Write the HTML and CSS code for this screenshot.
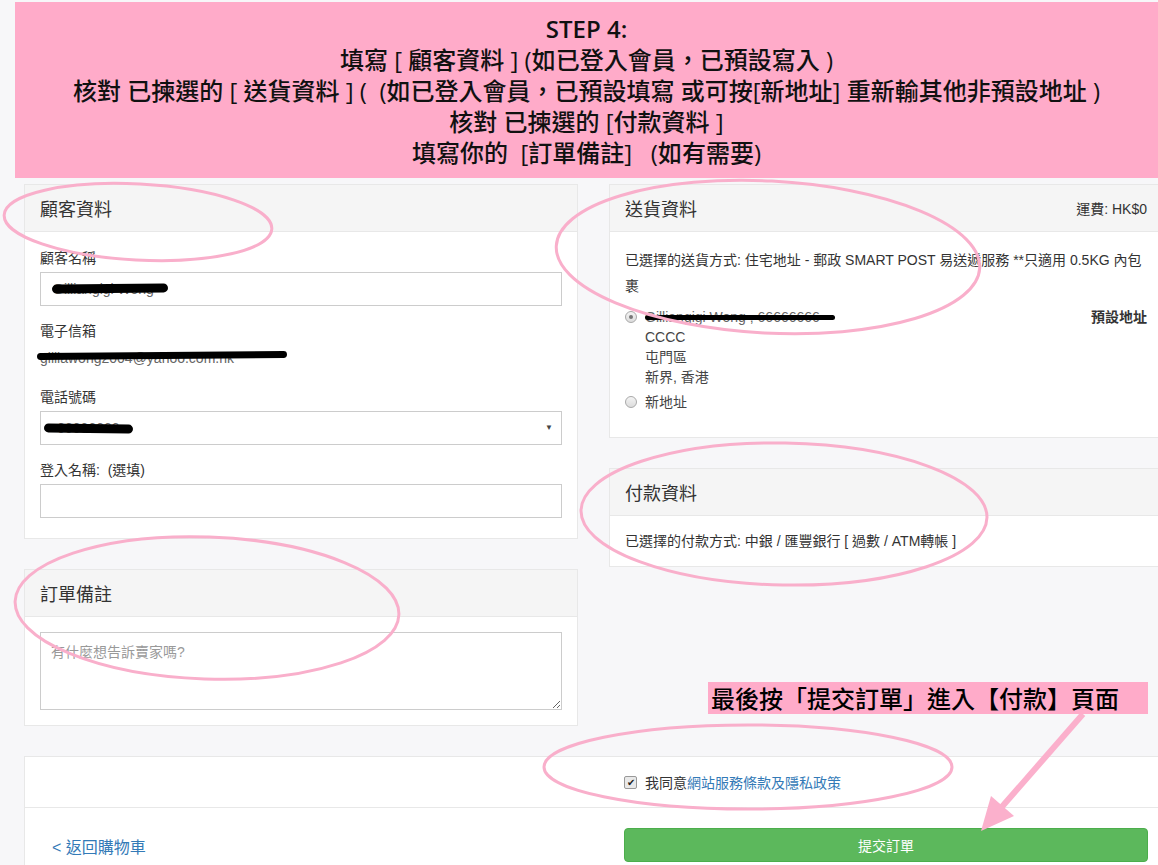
FILE: index.html
```html
<!DOCTYPE html>
<html lang="zh-Hant">

<head>
    <meta charset="UTF-8">
    <meta name="viewport" content="width=device-width, initial-scale=1.0">
    <title>結帳</title>
    <link rel="stylesheet" href="styles.css">
</head>

<body>
    <div class="banner">
        <span class="step">STEP 4:</span><br>
        填寫 [ 顧客資料 ] (如已登入會員，已預設寫入 )<br>
        核對 已揀選的 [ 送貨資料 ] (&nbsp; (如已登入會員，已預設填寫 或可按[新地址] 重新輸其他非預設地址 )<br>
        核對 已揀選的 [付款資料 ]<br>
        填寫你的&nbsp; [訂單備註]&nbsp;&nbsp; (如有需要)
    </div>

    <div class="layout">
        <div class="col">
            <div class="panel">
                <div class="panel-head"><span class="panel-title">顧客資料</span></div>
                <div class="panel-body customer">
                    <div class="field">
                        <label>顧客名稱</label>
                        <div class="input"><span class="redacted ink-name">Gilliangigi Wong</span></div>
                    </div>
                    <div class="field">
                        <label>電子信箱</label>
                        <div class="static"><span class="redacted ink-mail">gilliawong2004@yahoo.com.hk</span></div>
                    </div>
                    <div class="field">
                        <label>電話號碼</label>
                        <div class="input select"><span class="redacted ink-phone">66666666</span></div>
                    </div>
                    <div class="field">
                        <label>登入名稱:&nbsp; (選填)</label>
                        <div class="input"></div>
                    </div>
                </div>
            </div>

            <div class="panel">
                <div class="panel-head"><span class="panel-title">訂單備註</span></div>
                <div class="panel-body">
                    <textarea class="note" placeholder="有什麼想告訴賣家嗎?"></textarea>
                </div>
            </div>
        </div>

        <div class="col">
            <div class="panel">
                <div class="panel-head">
                    <span class="panel-title">送貨資料</span>
                    <span class="fee">運費: HK$0</span>
                </div>
                <div class="panel-body shipping">
                    <p class="method">已選擇的送貨方式: 住宅地址 - 郵政 SMART POST 易送遞服務 **只適用 0.5KG 內包裹</p>
                    <div class="addr">
                        <span class="radio checked"></span>
                        <div class="addr-lines">
                            <span class="redacted ink-addr">Gilliangigi Wong , 66666666</span><br>
                            CCCC<br>
                            屯門區<br>
                            新界, 香港
                        </div>
                        <b class="default">預設地址</b>
                    </div>
                    <div class="addr addr-new">
                        <span class="radio"></span>
                        <div class="addr-lines">新地址</div>
                    </div>
                </div>
            </div>

            <div class="panel">
                <div class="panel-head"><span class="panel-title">付款資料</span></div>
                <div class="panel-body payment">已選擇的付款方式: 中銀 / 匯豐銀行 [ 過數 / ATM轉帳 ]</div>
            </div>
        </div>
    </div>

    <div class="panel panel-bottom">
        <div class="agree-row">
            <div></div>
            <div class="agree"><span class="checkbox">✔</span>我同意<a href="#">網站服務條款及隱私政策</a></div>
        </div>
        <div class="action-row">
            <div><a class="back" href="#">&lt; 返回購物車</a></div>
            <div><button class="submit">提交訂單</button></div>
        </div>
    </div>

    <!-- 標示圈 -->
    <svg class="marks" width="1158" height="865" viewBox="0 0 1158 865">
        <ellipse cx="138" cy="222" rx="134" ry="38" transform="rotate(3 138 222)"></ellipse>
        <ellipse cx="768" cy="257" rx="212" ry="76" transform="rotate(3 768 257)"></ellipse>
        <ellipse cx="784" cy="514" rx="203" ry="71" transform="rotate(1 784 514)"></ellipse>
        <ellipse cx="207" cy="608" rx="192" ry="71" transform="rotate(2 207 608)"></ellipse>
        <ellipse cx="748" cy="767" rx="204" ry="42"></ellipse>
        <line class="arrow" x1="1083" y1="714" x2="1000" y2="809"></line>
        <polygon class="arrow-head" points="981,831 991,796 1014,816"></polygon>
    </svg>
    <div class="callout">最後按「提交訂單」進入【付款】頁面</div>
</body>

</html>
```
FILE: styles.css
```css
* {
    box-sizing: border-box;
}

html,
body {
    margin: 0;
    padding: 0;
    overflow: hidden;
}

body {
    position: relative;
    width: 1158px;
    height: 865px;
    background-color: #f7f7f9;
    font-family: "Liberation Sans", "Noto Sans CJK TC", sans-serif;
    font-size: 14px;
    color: #333;
}

.banner {
    margin: 2px 0 0 15px;
    height: 176px;
    padding-top: 11px;
    background-color: #ffabc9;
    text-align: center;
    font-family: "Open Sans", "Noto Sans CJK TC", sans-serif;
    font-size: 24px;
    font-weight: 500;
    line-height: 31px;
    color: #111;
}

.step {
    font-weight: 600;
}

.layout {
    display: grid;
    grid-template-columns: 554px 554px;
    column-gap: 31px;
    align-items: start;
    margin: 6px 0 0 24px;
}

.panel {
    background-color: #fff;
    border: 1px solid #e8e8e8;
    margin-bottom: 30px;
}

.panel-head {
    height: 47px;
    padding: 0 15px;
    background-color: #f5f5f5;
    border-bottom: 1px solid #e8e8e8;
    display: flex;
    align-items: center;
    justify-content: space-between;
}

.panel-title {
    font-size: 18px;
    color: #333;
}

.fee {
    font-size: 14px;
}

.panel-body {
    padding: 15px;
}

/* 顧客資料 */
.customer {
    padding: 16px 15px 20px;
}

.field {
    margin-bottom: 15px;
}

.field:last-child {
    margin-bottom: 0;
}

.field label {
    display: block;
    line-height: 20px;
    margin-bottom: 4px;
}

.input {
    position: relative;
    height: 34px;
    padding: 0 12px;
    border: 1px solid #ccc;
    background-color: #fff;
    display: flex;
    align-items: center;
    color: #555;
}

.select::after {
    content: "▼";
    position: absolute;
    right: 8px;
    top: 11px;
    font-size: 8px;
    color: #444;
}

.static {
    height: 27px;
    padding-top: 3px;
    line-height: 20px;
    color: #555;
}

.redacted {
    position: relative;
    display: inline-block;
    line-height: 20px;
    color: #666;
}

.redacted::after {
    content: "";
    position: absolute;
    background-color: #000;
    border-radius: 5px;
}

.ink-name::after {
    left: -1px;
    top: 5px;
    width: 116px;
    height: 9px;
    transform: rotate(-0.6deg);
}

.ink-mail::after {
    left: -3px;
    top: 4px;
    width: 250px;
    height: 7px;
    transform: rotate(-0.5deg);
}

.ink-phone {
    margin-left: 4px;
}

.ink-phone::after {
    left: -13px;
    top: 6px;
    width: 89px;
    height: 9px;
    transform: rotate(0.8deg);
}

.ink-addr::after {
    left: 0;
    top: 8px;
    width: 190px;
    height: 5px;
    border-radius: 3px;
}

.note {
    display: block;
    width: 100%;
    height: 78px;
    padding: 9px 10px;
    border: 1px solid #ccc;
    border-radius: 0;
    font-family: inherit;
    font-size: 14px;
    line-height: 20px;
}

.note::placeholder {
    color: #999;
}

/* 送貨資料 */
.shipping {
    padding: 15px 15px 25px;
}

.method {
    margin: 0 0 8px;
    line-height: 26px;
    color: #333;
}

.addr {
    display: flex;
    align-items: flex-start;
    line-height: 20px;
    color: #444;
}

.addr-new {
    margin-top: 5px;
}

.addr-lines {
    flex: 1;
}

.default {
    font-weight: bold;
    color: #333;
}

.radio {
    width: 12px;
    height: 12px;
    margin: 4px 8px 0 0;
    border: 1px solid #a9a9a9;
    border-radius: 50%;
    background: linear-gradient(#f4f4f4, #dcdcdc);
    display: flex;
    align-items: center;
    justify-content: center;
}

.radio.checked::after {
    content: "";
    width: 4px;
    height: 4px;
    border-radius: 50%;
    background-color: #777;
}

.payment {
    font-size: 14px;
    line-height: 20px;
}

/* 底部 */
.panel-bottom {
    width: 1140px;
    margin: 0 0 0 24px;
}

.agree-row,
.action-row {
    display: grid;
    grid-template-columns: 553px 554px;
    column-gap: 31px;
}

.agree-row {
    height: 51px;
    border-bottom: 1px solid #e8e8e8;
}

.agree {
    padding-left: 15px;
    display: flex;
    align-items: center;
}

.agree a {
    color: #337ab7;
    text-decoration: none;
}

.checkbox {
    width: 13px;
    height: 13px;
    margin-right: 8px;
    border: 1px solid #999;
    border-radius: 2px;
    background-color: #e9e9e9;
    font-size: 10px;
    line-height: 11px;
    text-align: center;
    color: #222;
}

.action-row {
    padding-top: 20px;
}

.action-row > div {
    padding: 0 15px;
}

.back {
    display: inline-block;
    margin-top: 3px;
    padding: 6px 12px;
    font-size: 16px;
    line-height: 22px;
    color: #337ab7;
    text-decoration: none;
}

.submit {
    width: 100%;
    height: 34px;
    border: 1px solid #4cae4c;
    border-radius: 4px;
    background-color: #5cb85c;
    color: #fff;
    font-family: inherit;
    font-size: 14px;
}

/* 標示 */
.marks {
    position: absolute;
    left: 0;
    top: 0;
    pointer-events: none;
}

.marks ellipse {
    fill: none;
    stroke: #f9afcb;
    stroke-width: 3;
}

.arrow {
    stroke: #fbb0cc;
    stroke-width: 6;
}

.arrow-head {
    fill: #fbb0cc;
}

.callout {
    position: absolute;
    left: 708px;
    top: 682px;
    width: 440px;
    height: 32px;
    padding-left: 3px;
    background-color: #ffabc9;
    font-family: "Noto Sans CJK TC", sans-serif;
    font-size: 24px;
    font-weight: 500;
    line-height: 32px;
    color: #000;
}
```
